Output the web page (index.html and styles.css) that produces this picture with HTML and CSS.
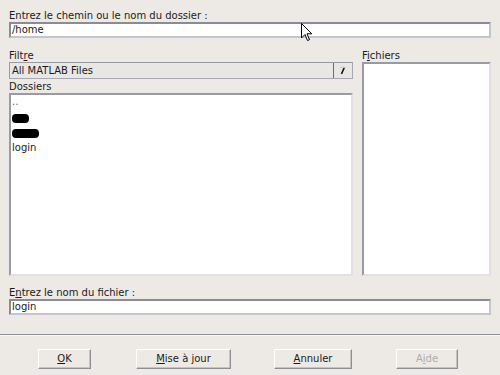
FILE: index.html
```html
<!DOCTYPE html>
<html>
<head>
<meta charset="utf-8">
<link rel="stylesheet" href="styles.css">
</head>
<body>
<div class="dialog">
  <div class="label lbl-path">Entrez le chemin ou le nom du dossier :</div>
  <div class="field">/home</div>
  <div class="columns">
    <div class="col-left">
      <div class="label lbl-filter">Filt<u>r</u>e</div>
      <div class="combo">
        <span class="combo-text">All MATLAB Files</span>
        <span class="combo-arrow">
          <svg width="8" height="9" viewBox="0 0 8 9"><path d="M5.5 1 L2.5 8" stroke="#111" stroke-width="1.6" fill="none"/><path d="M1 1.5 H7" stroke="#c8c8c8" stroke-width="1"/></svg>
        </span>
      </div>
      <div class="label lbl-dirs">Dossiers</div>
      <div class="list dirs">
        <div class="item dots">..</div>
        <div class="item"><span class="blot b1"></span></div>
        <div class="item"><span class="blot b2"></span></div>
        <div class="item">login</div>
      </div>
    </div>
    <div class="col-right">
      <div class="label lbl-files">F<u>i</u>chiers</div>
      <div class="list files"></div>
    </div>
  </div>
  <div class="label lbl-file">E<u>n</u>trez le nom du fichier :</div>
  <div class="field">login</div>
</div>
<div class="separator"></div>
<div class="buttons">
  <div class="btn btn-ok"><u>O</u>K</div>
  <div class="btn btn-update"><u>M</u>ise à jour</div>
  <div class="btn btn-cancel"><u>A</u>nnuler</div>
  <div class="btn btn-help disabled">A<u>i</u>de</div>
</div>
<svg class="cursor" width="12" height="19" viewBox="0 0 12 19"><path d="M0.5 0.5 L0.5 15 L4 11.5 L6.5 17.5 L8.5 16.7 L6 10.8 L10.8 10.8 Z" fill="#fff" stroke="#000" stroke-width="1"/></svg>
</body>
</html>
```
FILE: styles.css
```css
html, body {
  margin: 0;
  padding: 0;
}
body {
  width: 500px;
  height: 375px;
  background: #edeae6;
  font-family: "DejaVu Sans", sans-serif;
  font-size: 10px;
  color: #1a1a1a;
  position: relative;
  overflow: hidden;
}
u {
  text-decoration: underline;
  text-underline-offset: 1px;
}
.dialog {
  padding: 9px 9px 0 9px;
  display: flex;
  flex-direction: column;
}
.label {
  height: 13px;
  line-height: 13px;
  white-space: nowrap;
}
.field {
  height: 12px;
  line-height: 12px;
  background: #fff;
  border-style: solid;
  border-width: 2px;
  border-color: #8a8a98 #c4c4ce #c4c4ce #8a8a98;
  padding-left: 1px;
}
.columns {
  display: flex;
  gap: 9px;
  margin-top: 11px;
  height: 227px;
}
.col-left {
  width: 344px;
  display: flex;
  flex-direction: column;
}
.col-right {
  flex: 1;
  display: flex;
  flex-direction: column;
}
.combo {
  height: 15px;
  border: 1px solid #9a9aa4;
  border-right-color: #a8a8b2;
  border-bottom-color: #a8a8b2;
  background: #e9e7e3;
  display: flex;
  align-items: center;
}
.combo-text {
  flex: 1;
  padding-left: 2px;
}
.combo-arrow {
  width: 18px;
  height: 15px;
  border-left: 1px solid #6e6e78;
  display: flex;
  align-items: center;
  justify-content: center;
}
.lbl-dirs {
  margin-top: 1px;
}
.list {
  flex: 1;
  background: #fff;
  border-style: solid;
  border-width: 2px;
  border-color: #9a9aa4 #e0e0e6 #e0e0e6 #9a9aa4;
}
.dirs {
  padding-top: 2px;
}
.item {
  height: 15px;
  line-height: 15px;
  padding-left: 1px;
}
.dots {
  color: #666;
  height: 13px;
  line-height: 10px;
}
.blot {
  display: inline-block;
  background: #000;
  height: 9px;
  border-radius: 4px;
  vertical-align: middle;
}
.b1 { width: 17px; }
.b2 { width: 27px; }
.lbl-file {
  margin-top: 10px;
}
.separator {
  margin-top: 19px;
  height: 1px;
  background: #8e8e96;
  border-bottom: 1px solid #fafafa;
}
.buttons {
  display: flex;
  padding-left: 38px;
  margin-top: 13px;
}
.btn {
  height: 18px;
  line-height: 18px;
  text-align: center;
  background: #edeae6;
  border-style: solid;
  border-width: 1px;
  border-color: #ffffff #8e8e96 #8e8e96 #ffffff;
  box-shadow: inset -1px -1px 0 #c6c4c0;
}
.btn-ok { width: 51px; }
.btn-update { width: 93px; margin-left: 45px; }
.btn-cancel { width: 76px; margin-left: 43px; }
.btn-help { width: 60px; margin-left: 44px; }
.disabled { color: #aeaca8; }
.cursor {
  position: absolute;
  left: 301px;
  top: 23px;
}
```
